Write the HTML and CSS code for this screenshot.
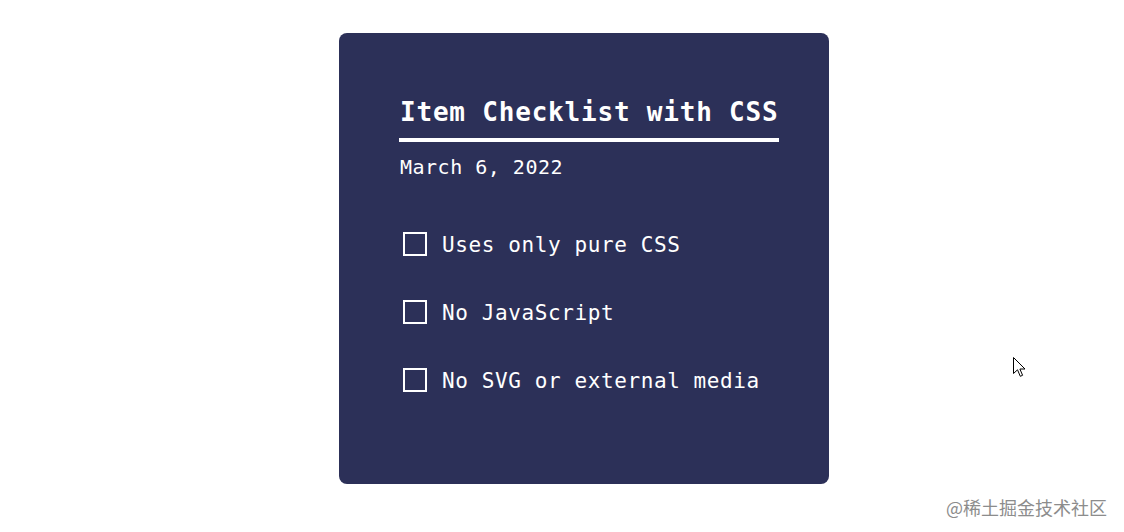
FILE: index.html
```html
<!DOCTYPE html>
<html lang="en">
<head>
<meta charset="utf-8">
<title>Item Checklist with CSS</title>
<link rel="stylesheet" href="styles.css">
</head>
<body>
  <main class="page">
    <section class="card">
      <h1 class="title">Item Checklist with CSS</h1>
      <p class="date">March 6, 2022</p>
      <ul class="list">
        <li class="item"><span class="box"></span><span class="label">Uses only pure CSS</span></li>
        <li class="item"><span class="box"></span><span class="label">No JavaScript</span></li>
        <li class="item"><span class="box"></span><span class="label">No SVG or external media</span></li>
      </ul>
    </section>
  </main>
  <svg class="cursor" width="14" height="22" viewBox="0 0 14 22" aria-hidden="true">
    <path d="M0.5 0.5 L0.5 16.5 L4.5 12.8 L7.3 19.3 L9.6 18.3 L6.9 12 L12 12 Z" fill="#fff" stroke="#000" stroke-width="1" stroke-linejoin="miter"/>
  </svg>
  <div class="watermark">@稀土掘金技术社区</div>
</body>
</html>
```

FILE: styles.css
```css
html, body {
  margin: 0;
  padding: 0;
  background: #ffffff;
}

body {
  width: 1124px;
  height: 532px;
  position: relative;
  overflow: hidden;
  font-family: "DejaVu Sans Mono", "Liberation Mono", monospace;
}

.page {
  display: flex;
  padding: 33px 0 0 339px;
}

.card {
  width: 490px;
  height: 451px;
  box-sizing: border-box;
  background: #2c3058;
  border-radius: 8px;
  padding: 63px 60px 0 60px;
  color: #ffffff;
  display: flex;
  flex-direction: column;
  align-items: flex-start;
}

.title {
  margin: 0;
  font-size: 26px;
  line-height: 32px;
  font-weight: bold;
  letter-spacing: 0.8px;
  width: 380px;
  padding: 0 0 10px 1px;
  box-sizing: border-box;
  border-bottom: 4px solid #ffffff;
  white-space: nowrap;
}

.date {
  margin: 13px 0 0 0;
  font-size: 20px;
  line-height: 24px;
  letter-spacing: 0.5px;
  padding-left: 1px;
}

.list {
  list-style: none;
  margin: 53px 0 0 0;
  padding: 0;
  display: flex;
  flex-direction: column;
  gap: 44px;
}

.item {
  display: flex;
  align-items: center;
  height: 24px;
}

.box {
  width: 24px;
  height: 24px;
  box-sizing: border-box;
  border: 2px solid #ffffff;
  margin-left: 4px;
  flex: none;
}

.label {
  margin-left: 15px;
  margin-top: 2px;
  font-size: 21px;
  line-height: 24px;
  letter-spacing: 0.6px;
  white-space: nowrap;
}

.cursor {
  position: absolute;
  left: 1013px;
  top: 357px;
}

.watermark {
  position: absolute;
  right: 17px;
  bottom: 14px;
  font-family: "Noto Sans CJK SC", sans-serif;
  font-size: 18px;
  line-height: 22px;
  color: #8c8c8c;
  letter-spacing: 0;
}
```
